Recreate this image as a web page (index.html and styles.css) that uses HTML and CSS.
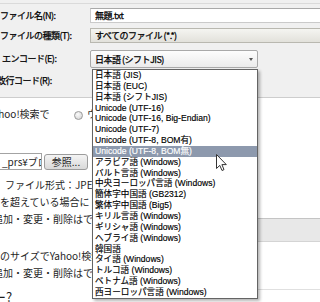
FILE: index.html
```html
<!DOCTYPE html>
<html lang="ja">
<head>
<meta charset="utf-8">
<title>名前を付けて保存</title>
<link rel="stylesheet" href="styles.css">
</head>
<body>
  <div class="dialog">
    <div class="topline"></div>
    <div class="form">
      <label class="lbl">ファイル名(N):</label>
      <div class="textbox">無題.txt</div>
      <label class="lbl">ファイルの種類(T):</label>
      <div class="select">すべてのファイル (*.*)</div>
      <label class="lbl lbl-enc">エンコード(E):</label>
      <div class="combo"><span>日本語 (シフトJIS)</span><span class="arrow"></span></div>
      <label class="lbl lbl-nl">改行コード(R):</label>
    </div>
  </div>

  <div class="page">
    <div class="main">
      <div class="search-row">
        <span class="search-label">Yahoo!検索で</span>
        <span class="radio"></span>
        <span class="radio-text">ウェブ</span>
      </div>
      <div class="file-row">
        <div class="file-input">_prs¥ブロ</div>
        <div class="browse">参照...</div>
      </div>
      <div class="para">
        <div class="l1">ファイル形式：JPEG</div>
        <div>を超えている場合に</div>
        <div class="l3">追加・変更・削除はで</div>
      </div>
      <div class="para para2">
        <div>のサイズでYahoo!検索</div>
        <div class="l3">追加・変更・削除はで</div>
      </div>
      <div class="heading">ヘルプセンター?</div>
    </div>
    <div class="side">
      <div class="side-spacer"></div>
      <div class="side-band"></div>
      <div class="side-box"></div>
    </div>
  </div>

  <ul class="dropdown">
    <li>日本語 (JIS)</li>
    <li>日本語 (EUC)</li>
    <li>日本語 (シフトJIS)</li>
    <li>Unicode (UTF-16)</li>
    <li>Unicode (UTF-16, Big-Endian)</li>
    <li>Unicode (UTF-7)</li>
    <li>Unicode (UTF-8, BOM有)</li>
    <li class="sel">Unicode (UTF-8, BOM無)</li>
    <li>アラビア語 (Windows)</li>
    <li>バルト言語 (Windows)</li>
    <li>中央ヨーロッパ言語 (Windows)</li>
    <li>簡体字中国語 (GB2312)</li>
    <li>繁体字中国語 (Big5)</li>
    <li>キリル言語 (Windows)</li>
    <li>ギリシャ語 (Windows)</li>
    <li>ヘブライ語 (Windows)</li>
    <li>韓国語</li>
    <li>タイ語 (Windows)</li>
    <li>トルコ語 (Windows)</li>
    <li>ベトナム語 (Windows)</li>
    <li>西ヨーロッパ言語 (Windows)</li>
  </ul>

  <svg class="cursor" width="12" height="18" viewBox="0 0 12 18">
    <path d="M0.5 0.5 L0.5 14.5 L3.8 11.4 L6 16.5 L8 15.6 L5.9 10.6 L10.3 10.6 Z" fill="#fff" stroke="#333" stroke-width="1" stroke-linejoin="round"/>
  </svg>
</body>
</html>
```

FILE: styles.css
```css
html, body {
  margin: 0;
  padding: 0;
}
body {
  width: 320px;
  height: 302px;
  overflow: hidden;
  position: relative;
  background: #fff;
  font-family: "Noto Sans CJK JP", sans-serif;
}

/* ---- save dialog ---- */
.dialog {
  background: #f0f0f0;
  border-bottom: 1px solid #cdcdcd;
  padding-bottom: 8px;
}
.topline {
  height: 3px;
  border-bottom: 1px solid #dadada;
}
.form {
  display: grid;
  grid-template-columns: 90px 1fr;
  grid-template-rows: 15px 15px 20px 16px;
  row-gap: 5px;
  padding-top: 4px;
  font-size: 9px;
  letter-spacing: -0.5px;
  color: #000;
  -webkit-text-stroke: 0.25px #000;
}
.lbl {
  line-height: 15px;
  white-space: nowrap;
}
.lbl-enc {
  align-self: end;
  line-height: 18px;
  margin-left: 2px;
}
.lbl-nl {
  margin-left: -3px;
  line-height: 16px;
}
.textbox {
  background: #fff;
  border: 1px solid #cacaca;
  border-top-color: #a9a9a9;
  border-right: none;
  padding-left: 4px;
  line-height: 13px;
  white-space: nowrap;
}
.select {
  background: linear-gradient(#f5f5f1, #e2e1db);
  border: 1px solid #b9b8b0;
  border-right: none;
  padding-left: 4px;
  line-height: 13px;
  white-space: nowrap;
}
.combo {
  align-self: end;
  width: 168px;
  height: 18px;
  box-sizing: border-box;
  border: 1px solid #a9a9a9;
  border-radius: 2px;
  background: linear-gradient(#fdfdfd, #ebebeb);
  display: flex;
  align-items: center;
  justify-content: space-between;
  padding: 0 4px;
  white-space: nowrap;
}
.arrow {
  width: 0;
  height: 0;
  border-left: 2.5px solid transparent;
  border-right: 2.5px solid transparent;
  border-top: 3px solid #555;
  -webkit-text-stroke: 0;
}

/* ---- web page behind ---- */
.page {
  display: grid;
  grid-template-columns: 258px 62px;
}
.main {
  overflow: hidden;
  font-size: 10px;
  color: #1e1e1e;
  white-space: nowrap;
}
.search-row {
  display: flex;
  align-items: center;
  height: 14px;
  margin-top: 8px;
  margin-left: -12px;
}
.search-label {
  width: 86px;
  flex: none;
}
.radio {
  flex: none;
  width: 9px;
  height: 9px;
  margin-top: 4px;
  box-sizing: border-box;
  border-radius: 50%;
  border: 1px solid #9a9a9a;
  background: radial-gradient(circle at 40% 35%, #fbfbfb, #cfcfcf);
}
.radio-text {
  margin-left: 4px;
}
.file-row {
  display: flex;
  align-items: center;
  height: 17px;
  margin-top: 33px;
}
.file-input {
  width: 42px;
  height: 17px;
  box-sizing: border-box;
  border: 1px solid #a3a3a3;
  border-left: none;
  padding-left: 2px;
  overflow: hidden;
  line-height: 15px;
}
.browse {
  margin-left: 2px;
  width: 44px;
  height: 16px;
  box-sizing: border-box;
  border: 1px solid #9c9c9c;
  border-radius: 3px;
  background: linear-gradient(#f4f4f4, #d9d9d9);
  text-align: center;
  line-height: 14px;
}
.para {
  line-height: 17px;
  margin-top: 6px;
}
.para2 {
  margin-top: 19.5px;
}
.l1 {
  padding-left: 5px;
}
.l3 {
  margin-left: -7px;
}
.heading {
  font-size: 13px;
  line-height: 16px;
  margin-top: 8.5px;
  margin-left: -85px;
}
.side-spacer {
  height: 120px;
}
.side-band {
  height: 22px;
  background: #e8e8e8;
  border-top: 1px solid #c4c4c4;
  border-bottom: 1px solid #d4d4d4;
}
.side-box {
  height: 47px;
  border-bottom: 1px solid #e0e0e0;
}

/* ---- open encoding list ---- */
.dropdown {
  position: absolute;
  left: 92px;
  top: 69px;
  width: 166px;
  box-sizing: border-box;
  margin: 0;
  padding: 0;
  list-style: none;
  background: #fff;
  border: 1px solid #646464;
  box-shadow: 2px 2px 3px rgba(0, 0, 0, 0.3);
  font-family: "Liberation Sans", "Noto Sans CJK JP", sans-serif;
  font-size: 8.6px;
  color: #000;
  -webkit-text-stroke: 0.15px #000;
}
.dropdown li {
  height: 10.85px;
  line-height: 10.85px;
  padding-left: 2px;
  white-space: nowrap;
}
.dropdown li.sel {
  background: #8d99ad;
  color: #fff;
  -webkit-text-stroke: 0.15px #fff;
}
.cursor {
  position: absolute;
  left: 216px;
  top: 154px;
}
```
